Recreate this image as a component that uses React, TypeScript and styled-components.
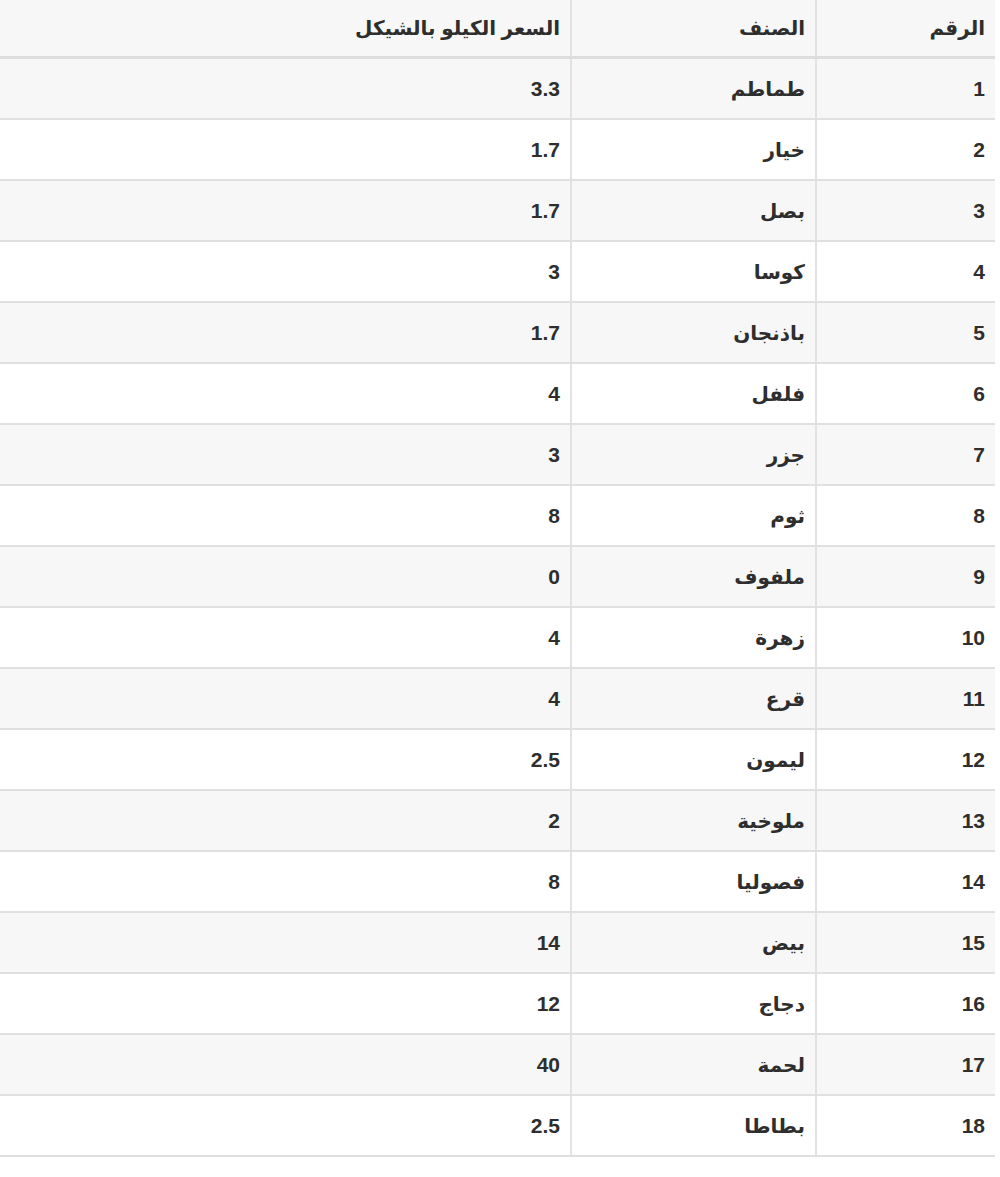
import styled, { createGlobalStyle } from "styled-components";

const GlobalStyle = createGlobalStyle`
  html, body {
    margin: 0;
    padding: 0;
    background: #ffffff;
  }
  body {
    font-family: "Liberation Sans", "DejaVu Sans", sans-serif;
    color: #333333;
  }
`;

const Wrapper = styled.div`
  direction: rtl;
  width: 1000px;
  height: 1177px;
  overflow: hidden;
  background: #ffffff;
`;

const Table = styled.table`
  width: 1015px;
  margin-right: 5px;
  border-collapse: collapse;
  table-layout: fixed;
  font-size: 20px;
  font-weight: bold;
  color: #2e2e2e;
`;

const HeadCell = styled.th<{ $width?: number }>`
  width: ${({ $width }) => ($width ? `${$width}px` : "auto")};
  height: 56px;
  padding: 0 10px;
  text-align: right;
  vertical-align: middle;
  background: #f7f7f7;
  border-left: 2px solid #e2e2e2;
  border-bottom: 3px solid #dddddd;
  font-weight: bold;
`;

const Row = styled.tr<{ $striped: boolean }>`
  background: ${({ $striped }) => ($striped ? "#f7f7f7" : "#ffffff")};
`;

const Cell = styled.td`
  height: 59px;
  padding: 0 10px;
  text-align: right;
  vertical-align: middle;
  border-left: 2px solid #e2e2e2;
  border-bottom: 2px solid #e0e0e0;
`;

const Num = styled.span`
  font-size: 21px;
`;

const rows: [string, string][] = [
  ["طماطم", "3.3"],
  ["خيار", "1.7"],
  ["بصل", "1.7"],
  ["كوسا", "3"],
  ["باذنجان", "1.7"],
  ["فلفل", "4"],
  ["جزر", "3"],
  ["ثوم", "8"],
  ["ملفوف", "0"],
  ["زهرة", "4"],
  ["قرع", "4"],
  ["ليمون", "2.5"],
  ["ملوخية", "2"],
  ["فصوليا", "8"],
  ["بيض", "14"],
  ["دجاج", "12"],
  ["لحمة", "40"],
  ["بطاطا", "2.5"],
];

function App() {
  return (
    <Wrapper>
      <GlobalStyle />
      <Table>
        <thead>
          <tr>
            <HeadCell $width={158}>الرقم</HeadCell>
            <HeadCell $width={223}>الصنف</HeadCell>
            <HeadCell>السعر الكيلو بالشيكل</HeadCell>
          </tr>
        </thead>
        <tbody>
          {rows.map(([name, price], i) => (
            <Row key={i} $striped={i % 2 === 0}>
              <Cell>
                <Num>{i + 1}</Num>
              </Cell>
              <Cell>{name}</Cell>
              <Cell>
                <Num>{price}</Num>
              </Cell>
            </Row>
          ))}
        </tbody>
      </Table>
    </Wrapper>
  );
}

export default App;
